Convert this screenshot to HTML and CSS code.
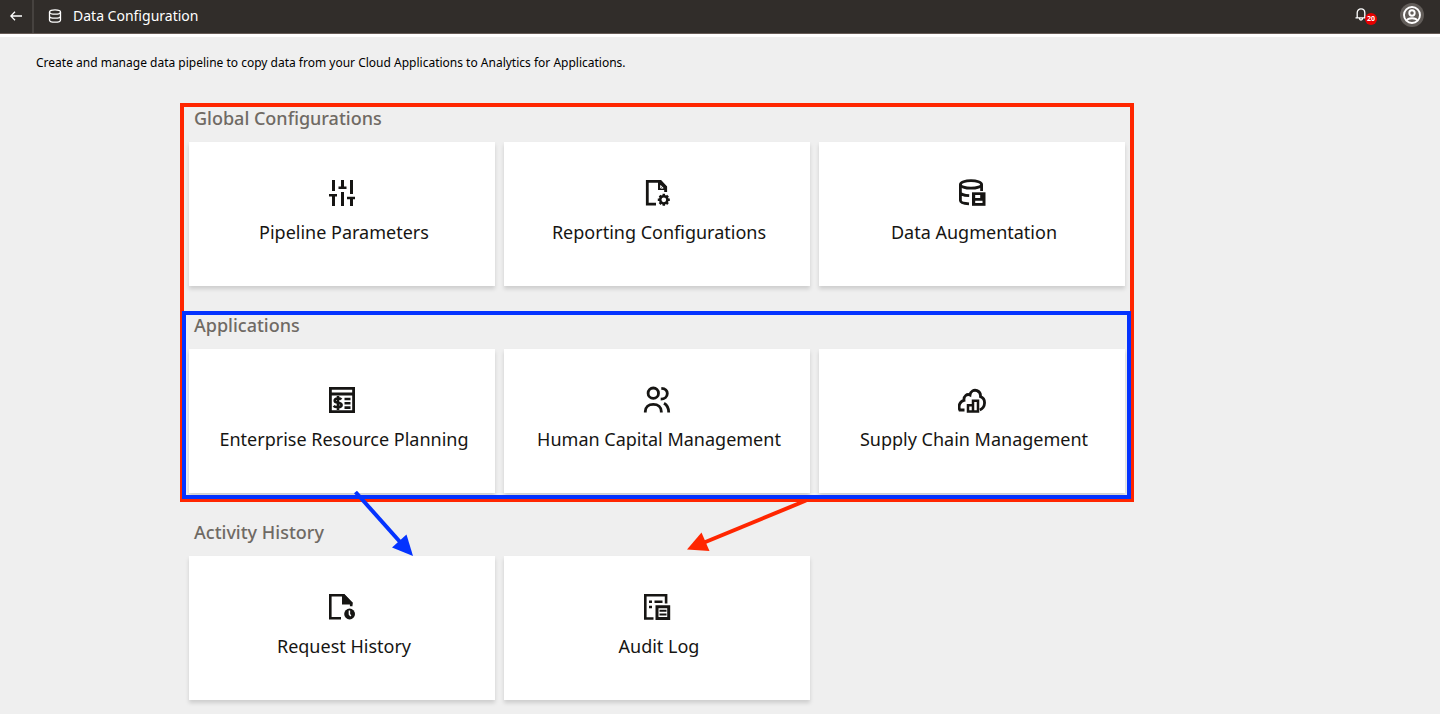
FILE: index.html
```
<!DOCTYPE html>
<html lang="en">
<head>
<meta charset="utf-8">
<meta name="viewport" content="width=device-width, initial-scale=1">
<title>Data Configuration</title>
<link rel="stylesheet" href="styles.css">
</head>
<body>
<header class="topbar">
  <button class="back" type="button" aria-label="Back">
    <svg width="12" height="10" viewBox="0 0 12 10" fill="none" stroke="currentColor" stroke-width="1.3"><path d="M12 5H1M5 .8 .8 5 5 9.2"/></svg>
  </button>
  <svg class="title-icon" width="14" height="14" viewBox="0 0 14 14" fill="none" stroke="currentColor" stroke-width="1.3"><ellipse cx="7" cy="3" rx="5.5" ry="2.2"/><path d="M1.500 3v8c0 1.2 2.500 2.2 5.500 2.2s5.500-1 5.500-2.200V3M1.500 7c0 1.200 2.500 2.200 5.500 2.200s5.500-1 5.500-2.200"/></svg>
  <h1 class="title">Data Configuration</h1>
  <button class="bell" type="button" aria-label="Notifications">
    <svg width="12" height="13" viewBox="0 0 12 13" fill="none" stroke="currentColor" stroke-width="1.3"><path d="M.5 9.8h11M2.2 9.5V4.8C2.2 2.5 3.8.8 6 .8s3.800 1.700 3.800 4v4.700M4.500 10.500c0 2 3 2 3 0"/></svg>
    <span class="badge">20</span>
  </button>
  <button class="avatar" type="button" aria-label="Account">
    <svg width="18" height="18" viewBox="0 0 18 18" fill="none" stroke="currentColor" stroke-width="1.900"><circle cx="9" cy="9" r="8"/><circle cx="9" cy="7" r="2.700"/><path d="M3.800 14.500c1-3 9.400-3 10.400 0"/></svg>
  </button>
</header>
<main class="page">
  <p class="intro">Create and manage data pipeline to copy data from your Cloud Applications to Analytics for Applications.</p>
  <div class="board">
    <div class="scope">
      <section class="group">
        <h2 class="group-title">Global Configurations</h2>
        <div class="cards">
          <a class="card" href="#pipeline">
            <svg class="icon" viewBox="0 0 28 28" fill="none" stroke="currentColor" stroke-width="3"><path d="M5.500 1v11M14.500 1v7M23.500 1v14M5.500 17v10M14.500 13v14M23.500 20v7"/><path stroke-width="2.600" d="M1 16.300h8M10.500 8.700h8M19 19h8"/></svg>
            <span class="label">Pipeline Parameters</span>
          </a>
          <a class="card" href="#reporting">
            <svg class="icon" viewBox="0 0 28 28" fill="none" stroke="currentColor" stroke-width="2.800"><path d="M13 25.200H4.300V2.300H17l5.700 6V13"/><path fill="currentColor" stroke="none" d="M15 1h3l6 6.500V13h-2.300v-2H15z"/><path stroke="#fff" stroke-width="1" d="m17.700 6.500 2.500 2.600h-2.500z"/><circle cx="20.800" cy="20.800" r="3.600" stroke-width="2.500"/><path stroke-width="2.500" d="M20.800 14.800v2M20.800 24.800v2M14.800 20.800h2M24.800 20.800h2M16.600 16.600l1.400 1.400M23.600 23.600l1.400 1.400M16.600 25l1.400-1.400M23.600 18l1.400-1.400"/></svg>
            <span class="label">Reporting Configurations</span>
          </a>
          <a class="card" href="#augmentation">
            <svg class="icon" viewBox="0 0 28 28" fill="none" stroke="currentColor" stroke-width="2.800"><ellipse cx="13" cy="5.400" rx="10.600" ry="3.800"/><path d="M2.400 5.400v16.200c0 1.800 3.500 3 8.600 3.300M2.400 13.200c0 2 4 3.300 8.800 3.500M23.600 5.400V12"/><path fill="currentColor" stroke="none" d="M14 13.300h13.500v13.500H14z"/><path fill="#fff" stroke="none" d="M17.200 16h5v3h-5zM17.200 21.700h7.300v2.300h-7.300z"/></svg>
            <span class="label">Data Augmentation</span>
          </a>
        </div>
      </section>
      <div class="frame frame-red"></div>
      <section class="group">
        <h2 class="group-title">Applications</h2>
        <div class="cards">
          <a class="card" href="#erp">
            <svg class="icon" viewBox="0 0 28 28" fill="none" stroke="currentColor" stroke-width="2.800"><path d="M2.400 2.400h23.200v23.200H2.400zM2.400 8h23.200"/><path stroke-width="2.600" d="M13.300 13.500c-1-1.500-6.600-1.700-6.600 1.200 0 3 6.900 1.200 6.900 4.300 0 3-6.500 2.500-8 .8M10 10v14M16.500 13h6M16.500 17.300h6M16.500 21.600h6"/></svg>
            <span class="label">Enterprise Resource Planning</span>
          </a>
          <a class="card" href="#hcm">
            <svg class="icon" viewBox="0 0 28 28" fill="none" stroke="currentColor" stroke-width="2.800"><circle cx="10.300" cy="7.200" r="5.200"/><path d="M2.300 26.500v-1c0-4.300 3.200-7.200 8-7.200s8 2.900 8 7.200v1M18.300 2.300c3.600.2 6 2.200 6 5.300s-2.500 5.600-6.600 5.600M21 17.300c3 1.700 4.700 4.800 4.700 9.200"/></svg>
            <span class="label">Human Capital Management</span>
          </a>
          <a class="card" href="#scm">
            <svg class="icon" viewBox="0 0 28 28" fill="none" stroke="currentColor" stroke-width="2.800"><path d="M6.500 24H1.800c-1.800-4 .2-9 4.200-9.700C5.500 10 9 7.500 12 9c.5-4 4-5.500 7-4.400 3.200 1.200 3.700 3.700 3.500 6 5.500 2 5.500 10.500-.7 13.400"/><path stroke-width="2.500" d="M10 19.200h5v6.300h-5zM15 14.700h5v10.800h-5z"/></svg>
            <span class="label">Supply Chain Management</span>
          </a>
        </div>
        <div class="frame frame-blue"></div>
      </section>
    </div>
    <section class="group">
      <h2 class="group-title">Activity History</h2>
      <div class="cards">
        <a class="card" href="#requests">
          <svg class="icon" viewBox="0 0 28 28" fill="none" stroke="currentColor" stroke-width="2.600"><path d="M13 25.200H2.300V2.200h13.200l7.700 8v3"/><path fill="currentColor" stroke="none" d="M14 1h2.300l8.200 8.500V11.500H14z"/><circle cx="21.600" cy="21" r="5.400" fill="currentColor" stroke="none"/><path stroke="#fff" stroke-width="1.500" d="M21.400 17.500v3.700l1.400 1.700"/></svg>
          <span class="label">Request History</span>
        </a>
        <a class="card" href="#audit">
          <svg class="icon" viewBox="0 0 28 28" fill="none" stroke="currentColor" stroke-width="2.600"><path d="M10.500 25.500H2.300V2.200h20.800v8.300"/><path d="M6 8.700h3M11.500 8.700h8M6 14h3"/><path stroke-width="3" d="M14 13.700h11.700v11.800H14z"/><path stroke-width="1.900" d="M16.500 17.800h7M16.500 21.500h7"/></svg>
          <span class="label">Audit Log</span>
        </a>
      </div>
      <svg class="arrows" width="460" height="68" viewBox="350 490 460 68" aria-hidden="true">
        <g fill="#0433ff" stroke="#0433ff"><path stroke-width="4" d="M355.500 492 401 543"/><path stroke="none" d="M413 556 406.500 534.500 392 547.500z"/></g>
        <g fill="#ff2600" stroke="#ff2600"><path stroke-width="4" d="M806 500.500 703 543"/><path stroke="none" d="M687 549.500 701.500 532.500 709.500 551z"/></g>
      </svg>
    </section>
  </div>
</main>
</body>
</html>
```
FILE: styles.css
```
* { box-sizing: border-box; }

body {
  margin: 0;
  background: #efefef;
  color: #161513;
  font-family: "Noto Sans", "Open Sans", sans-serif;
}

button {
  padding: 0;
  border: 0;
  background: none;
  color: inherit;
  font: inherit;
}

.topbar {
  display: flex;
  align-items: center;
  height: 34px;
  padding-right: 16px;
  background: #312d2a;
  border-bottom: 1px solid #665b56;
  box-shadow: 0 3px 0 #fff;
  color: #fff;
}

.back {
  display: flex;
  align-items: center;
  justify-content: center;
  width: 34px;
  height: 100%;
  padding-bottom: 2px;
  border-right: 2px solid #46423f;
}

.title-icon { margin: 0 11px 2px 14px; }

.title {
  margin: 0 auto 2px 0;
  font-size: 14px;
  line-height: 20px;
  font-weight: 400;
}

.bell {
  position: relative;
  display: flex;
  margin: 0 33px 4px 0;
}

.badge {
  position: absolute;
  left: 10px;
  top: 5px;
  width: 12px;
  height: 12px;
  border-radius: 50%;
  background: #e60000;
  font-size: 7px;
  line-height: 12px;
  font-weight: 700;
  text-align: center;
}

.avatar {
  display: flex;
  align-items: center;
  justify-content: center;
  width: 24px;
  height: 24px;
  margin-bottom: 4px;
  border-radius: 50%;
  background: #625d59;
}

.page { padding: 20px 36px 14px; }

.intro {
  margin: 0;
  font-size: 12px;
  line-height: 18px;
  color: #000;
}

.board {
  display: grid;
  gap: 27px;
  max-width: 936px;
  margin: 34px 0 0 153px;
}

.scope {
  position: relative;
  display: grid;
  gap: 27px;
}

.group { position: relative; }

.group-title {
  margin: 0 5px 12px;
  font-size: 18px;
  line-height: 24px;
  font-weight: 500;
  color: #6f6a64;
}

.cards {
  display: grid;
  grid-template-columns: repeat(3, 1fr);
  gap: 9px;
}

.card {
  display: flex;
  flex-direction: column;
  align-items: center;
  gap: 12px;
  min-height: 144px;
  padding-top: 37px;
  background: #fff;
  box-shadow: 0 3px 4px rgba(0, 0, 0, 0.14);
  color: inherit;
  text-decoration: none;
}

.icon {
  width: 28px;
  height: 28px;
}

.label {
  padding-left: 4px;
  font-size: 18px;
  line-height: 26px;
}

.frame {
  position: absolute;
  border: 4px solid;
  pointer-events: none;
}

.frame-red {
  inset: -3px -9px -9px;
  border-color: #ff2600;
}

.frame-blue {
  inset: -2px -6px -6px -7px;
  border-color: #0433ff;
}

.arrows {
  position: absolute;
  left: 161px;
  top: -30px;
  pointer-events: none;
}
```
